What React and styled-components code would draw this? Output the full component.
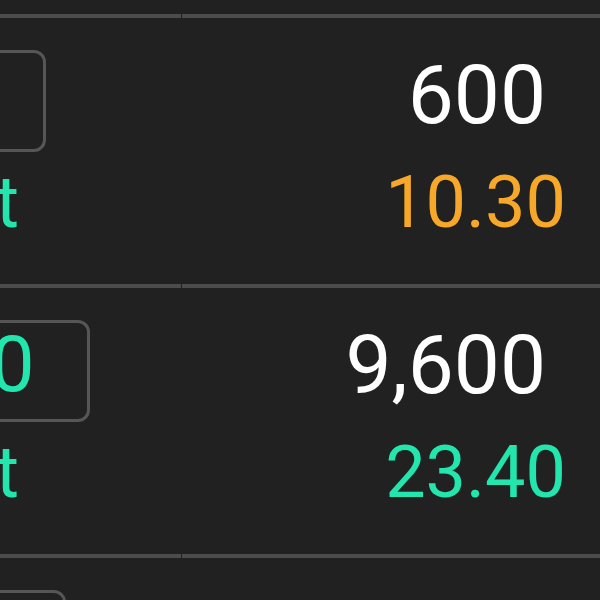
import React from "react";
import styled, { createGlobalStyle } from "styled-components";

const Global = createGlobalStyle`
  html, body {
    margin: 0;
    padding: 0;
    background: #212121;
    width: 600px;
    height: 600px;
    overflow: hidden;
  }
  body {
    font-family: Roboto, "Noto Sans", Arial, sans-serif;
    color: #fff;
  }
`;

const Viewport = styled.div`
  width: 600px;
  height: 600px;
  overflow: hidden;
  background: #212121;
`;

/* the list is scrolled: the first row sits mostly above the view */
const List = styled.div`
  display: flex;
  flex-direction: column;
  margin-top: -252px;
  margin-left: -140px;
  width: 740px;
`;

const Row = styled.div`
  display: grid;
  grid-template-columns: 321px 418px;
  column-gap: 1px;
  height: 270px;
`;

const Cell = styled.div`
  display: flex;
  flex-direction: column;
  border-bottom: 4px solid #4c4c4c;
  box-sizing: border-box;
  height: 270px;
  overflow: hidden;
`;

const LeftCell = styled(Cell)`
  align-items: flex-start;
  padding-top: 32px;
`;

const RightCell = styled(Cell)`
  align-items: flex-end;
  padding-top: 36px;
`;

const QtyBox = styled.div`
  box-sizing: border-box;
  height: 102px;
  margin-left: 20px;
  padding: 0 52px 12px 20px;
  border: 3px solid #565656;
  border-radius: 12px;
  font-size: 78px;
  line-height: 84px;
  color: #22e6ae;
  white-space: nowrap;
`;

const Label = styled.div`
  align-self: flex-end;
  margin-right: 162px;
  margin-top: 15px;
  font-size: 72px;
  line-height: 72px;
  color: #22e6ae;
  white-space: nowrap;
`;

const Amount = styled.div`
  margin-right: 54px;
  font-size: 82px;
  line-height: 82px;
  color: #ffffff;
  white-space: nowrap;
`;

const Price = styled.div`
  margin-right: 34px;
  margin-top: 31px;
  font-size: 72px;
  line-height: 72px;
  color: ${(p) => (p.$tone === "up" ? "#22e6ae" : "#f7a829")};
  white-space: nowrap;
`;

const rows = [
  { qty: "50", label: "Lot", amount: "1,200", price: "12.10", tone: "flat" },
  { qty: "50", label: "Lot", amount: "600", price: "10.30", tone: "flat" },
  { qty: "100", label: "Lot", amount: "9,600", price: "23.40", tone: "up" },
  { qty: "1.5", label: "Lot", amount: "4,800", price: "18.20", tone: "up" },
];

export default function App() {
  return (
    <>
      <Global />
      <Viewport>
        <List>
          {rows.map((r, i) => (
            <Row key={i}>
              <LeftCell>
                <QtyBox>{r.qty}</QtyBox>
                <Label>{r.label}</Label>
              </LeftCell>
              <RightCell>
                <Amount>{r.amount}</Amount>
                <Price $tone={r.tone}>{r.price}</Price>
              </RightCell>
            </Row>
          ))}
        </List>
      </Viewport>
    </>
  );
}
